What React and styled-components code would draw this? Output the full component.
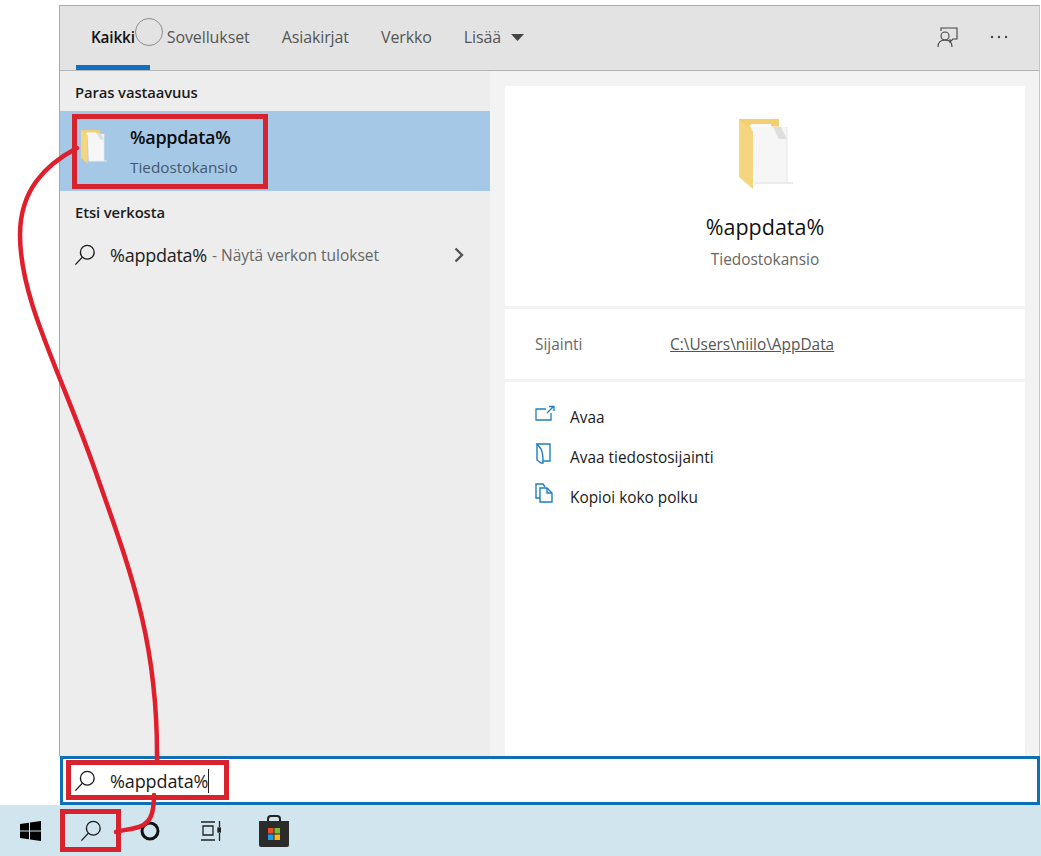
import React from "react";
import styled, { createGlobalStyle } from "styled-components";

const Global = createGlobalStyle`
  html, body { margin: 0; padding: 0; background: #fff; }
  body { font-family: "Open Sans", "Noto Sans", sans-serif; overflow: hidden; }
`;
const Page = styled.div`
  position: relative; width: 1041px; height: 856px; display: flex; flex-direction: column; background: #fff;
`;
const Window = styled.div`
  margin: 5px 0 0 59px; width: 981px; height: 751px; display: flex; flex-direction: column;
  border: 1px solid #a9a9a9; border-bottom: 0; border-right-color: #c4c4c4; box-sizing: border-box;
`;
const Tabs = styled.div`
  height: 65px; flex: none; display: flex; align-items: stretch; background: #e3e3e3;
  border-bottom: 1px solid #b4b4b4; box-sizing: border-box; padding-left: 16px;
`;
const Tab = styled.div`
  position: relative; display: flex; align-items: center; gap: 10px; height: 64px; padding: 0 16px 2px;
  box-sizing: border-box; font-size: 16px; letter-spacing: -0.1px;
  color: ${p => (p.$active ? "#111" : "#555")}; font-weight: ${p => (p.$active ? 600 : 400)};
  &::after {
    content: ""; display: ${p => (p.$active ? "block" : "none")}; position: absolute;
    left: 0; right: 0; bottom: 0; height: 5px; background: #0f6fc0;
  }
`;
const ActiveTab = styled(Tab)`padding: 0 15px 2px; font-size: 15.4px; margin-right: 1px; letter-spacing: -0.2px;`;
const Spacer = styled.div`flex: 1;`;
const TopIcons = styled.div`
  display: flex; align-items: center; gap: 31px; padding-right: 31px; padding-bottom: 2px;
`;
const Body = styled.div`flex: 1; display: flex; min-height: 0;`;
const Left = styled.div`
  width: 430px; flex: none; background: #ededed; display: flex; flex-direction: column;
`;
const Heading = styled.div`
  height: ${p => p.$h}px; box-sizing: border-box; padding: ${p => p.$pt}px 0 0 15px;
  font-size: 14.8px; font-weight: 600; color: #1c1c1c; letter-spacing: -0.1px; line-height: 18px;
`;
const BestRow = styled.div`
  height: 80px; background: #a6c8e7; display: flex; align-items: flex-start; flex: none;
`;
const BestIcon = styled.div`width: 70px; flex: none; padding: 18px 0 0 20px; box-sizing: border-box; display: flex;`;
const BestText = styled.div`display: flex; flex-direction: column; padding-top: 13px;`;
const BestTitle = styled.div`font-size: 18px; font-weight: 600; color: #0c0c0c; line-height: 26px; letter-spacing: -0.3px;`;
const BestSub = styled.div`font-size: 15.3px; color: #44586b; line-height: 20px; margin-top: 7px;`;
const WebRow = styled.div`
  height: 44px; display: flex; align-items: center; padding: 0 26px 0 14px; flex: none;
`;
const WebQuery = styled.span`font-size: 18px; color: #222; margin-left: 14px; letter-spacing: -0.25px;`;
const WebHint = styled.span`font-size: 15.5px; color: #666; margin-left: 5px; flex: 1;`;
const Right = styled.div`
  flex: 1; background: #f3f3f3; padding: 15px 14px 0 15px; display: flex; min-width: 0;
`;
const Card = styled.div`
  flex: 1; background: #fff; display: flex; flex-direction: column;
`;
const Hero = styled.div`
  height: 223px; flex: none; display: flex; flex-direction: column; align-items: center; padding-top: 31px;
  box-sizing: border-box; border-bottom: 3px solid #f3f3f3;
`;
const HeroTitle = styled.div`font-size: 21.5px; color: #111; line-height: 30px; margin-top: 23px;`;
const HeroSub = styled.div`font-size: 15.4px; color: #666; line-height: 20px; margin-top: 8px;`;
const Location = styled.div`
  height: 73px; flex: none; display: flex; align-items: center; padding: 0 0 0 30px; box-sizing: border-box;
  border-bottom: 3px solid #f3f3f3; font-size: 15.4px; color: #666;
`;
const LocLabel = styled.div`width: 135px;`;
const LocLink = styled.span`text-decoration: underline; color: #555;`;
const Actions = styled.div`display: flex; flex-direction: column; padding-top: 15px;`;
const Action = styled.div`
  height: 40px; display: flex; align-items: center; padding-left: 30px; font-size: 15.4px; color: #1a1a1a;
`;
const ActionIcon = styled.div`width: 35px; flex: none; display: flex; transform: translateY(-4px);`;
const SearchBox = styled.div`
  margin-left: 60px; width: 980px; height: 49px; flex: none; box-sizing: border-box; background: #fff;
  border: 3px solid #0f6fb5; display: flex; align-items: center; padding: 0 0 0 11px;
`;
const SearchText = styled.span`
  font-size: 18px; color: #1a1a1a; margin-left: 14px; border-right: 1px solid #222; line-height: 24px; letter-spacing: -0.1px;
`;
const Taskbar = styled.div`
  flex: 1; background: #d1e5ef; display: flex; align-items: center; padding-left: 20px;
`;
const Slot = styled.div`width: ${p => p.$w}px; flex: none; display: flex;`;
const Overlay = styled.svg`position: absolute; inset: 0; pointer-events: none;`;

const Glass = ({ size = 24, sw = 1.5 }) => (
  <svg width={size} height={size} viewBox="0 0 24 24" fill="none" stroke="#1a1a1a" strokeWidth={sw}>
    <circle cx="14.5" cy="9" r="7.5" />
    <path d="M9.2 14.3 L1.5 22.5" />
  </svg>
);
const Folder = ({ w, h }) => (
  <svg width={w} height={h} viewBox="0 0 56 72" fill="none">
    <path d="M2 2 H42 V12 H2Z" fill="#f3cf72" />
    <path d="M2 2 L16 14 V72 L2 60Z" fill="#f6d57f" />
    <path d="M12 8 L50 10 V66 H18 L16 14Z" fill="#f6f6f6" />
    <path d="M14 7 H34 V10 H14Z" fill="#fbfbfb" />
    <path d="M36 10 H44 L50 22 H42Z" fill="#dedede" />
    <path d="M18 66 H56" stroke="#ececec" strokeWidth="2" />
    <path d="M50 10 V66" stroke="#e6e6e6" />
  </svg>
);

export default function App() {
  return (
    <Page>
      <Global />
      <Window>
        <Tabs>
          <ActiveTab $active>Kaikki</ActiveTab>
          <Tab>Sovellukset</Tab>
          <Tab>Asiakirjat</Tab>
          <Tab>Verkko</Tab>
          <Tab>
            Lisää
            <svg width="13" height="7" viewBox="0 0 13 7"><path d="M0 0H13L6.5 7Z" fill="#444" /></svg>
          </Tab>
          <Spacer />
          <TopIcons>
            <svg width="22" height="22" viewBox="0 0 22 22" fill="none" stroke="#444" strokeWidth="1.1">
              <path d="M4 5 V2 H20 V13 H16 L13 16 V13" />
              <circle cx="8" cy="10" r="4" />
              <path d="M1 21 C1 16 4 14 8 14 C12 14 15 16 15 21" />
            </svg>
            <svg width="18" height="4" viewBox="0 0 18 4"><g fill="#444"><circle cx="2" cy="2" r="1.2" /><circle cx="9" cy="2" r="1.2" /><circle cx="16" cy="2" r="1.2" /></g></svg>
          </TopIcons>
        </Tabs>
        <Body>
          <Left>
            <Heading $h={40} $pt={12}>Paras vastaavuus</Heading>
            <BestRow>
              <BestIcon><Folder w={27} h={35} /></BestIcon>
              <BestText>
                <BestTitle>%appdata%</BestTitle>
                <BestSub>Tiedostokansio</BestSub>
              </BestText>
            </BestRow>
            <Heading $h={42} $pt={12}>Etsi verkosta</Heading>
            <WebRow>
              <Glass size={22} />
              <WebQuery>%appdata%</WebQuery>
              <WebHint>- Näytä verkon tulokset</WebHint>
              <svg width="10" height="16" viewBox="0 0 10 16" fill="none" stroke="#555" strokeWidth="2.4"><path d="M1.5 1.5 L8 8 L1.5 14.5" /></svg>
            </WebRow>
          </Left>
          <Right>
            <Card>
              <Hero>
                <Folder w={56} h={72} />
                <HeroTitle>%appdata%</HeroTitle>
                <HeroSub>Tiedostokansio</HeroSub>
              </Hero>
              <Location>
                <LocLabel>Sijainti</LocLabel>
                <LocLink>C:\Users\niilo\AppData</LocLink>
              </Location>
              <Actions>
                <Action>
                  <ActionIcon>
                    <svg width="20" height="16" viewBox="0 0 20 16" fill="none" stroke="#1f7fc0" strokeWidth="1.3">
                      <path d="M11 4 H1 V15 H16 V8" /><path d="M12 8 L18 2 M14 1.5 H19 V6" />
                    </svg>
                  </ActionIcon>
                  Avaa
                </Action>
                <Action>
                  <ActionIcon>
                    <svg width="17" height="21" viewBox="0 0 17 21" fill="none" stroke="#1f7fc0" strokeWidth="1.4">
                      <path d="M2 1 H15 V18 H8 C8 14 8 10 6 6 Z" /><path d="M2 1 V17 L6 20 H8 V18" />
                    </svg>
                  </ActionIcon>
                  Avaa tiedostosijainti
                </Action>
                <Action>
                  <ActionIcon>
                    <svg width="18" height="20" viewBox="0 0 18 20" fill="none" stroke="#1f7fc0" strokeWidth="1.4">
                      <path d="M5 15 H1 V1 H8 L10 4" /><path d="M5 5 H12 L17 10 V19 H5 Z" /><path d="M12 5 V10 H17" />
                    </svg>
                  </ActionIcon>
                  Kopioi koko polku
                </Action>
              </Actions>
            </Card>
          </Right>
        </Body>
      </Window>
      <SearchBox>
        <Glass size={22} />
        <SearchText>%appdata%</SearchText>
      </SearchBox>
      <Taskbar>
        <Slot $w={60}>
          <svg width="21" height="20" viewBox="0 0 21 20" fill="#000">
            <path d="M0 3 L9 1.7 V9.4 H0Z M10 1.5 L21 0 V9.4 H10Z M0 10.6 H9 V18.3 L0 17Z M10 10.6 H21 V20 L10 18.5Z" />
          </svg>
        </Slot>
        <Slot $w={60}><Glass size={22} /></Slot>
        <Slot $w={60}>
          <svg width="20" height="20" viewBox="0 0 20 20" fill="none" stroke="#111" strokeWidth="3"><circle cx="10" cy="10" r="8" /></svg>
        </Slot>
        <Slot $w={59}>
          <svg width="21" height="20" viewBox="0 0 21 20" fill="none" stroke="#222" strokeWidth="1.3">
            <path d="M1 1 H15 M1 19 H15 M3 5 H13 V14 H3 Z M19.5 0 V6 M19.5 12 V20" /><rect x="18" y="7" width="3" height="4" fill="#222" />
          </svg>
        </Slot>
        <svg width="30" height="32" viewBox="0 0 30 32">
          <path d="M9 8 V4 Q9 1 12 1 H18 Q21 1 21 4 V8" fill="none" stroke="#222" strokeWidth="2" />
          <path d="M0 6 H30 V30 Q30 32 28 32 H2 Q0 32 0 30Z" fill="#2b2b2b" />
          <rect x="9" y="13" width="5.5" height="5.5" fill="#e8502a" />
          <rect x="15.5" y="13" width="5.5" height="5.5" fill="#7fb935" />
          <rect x="9" y="19.5" width="5.5" height="5.5" fill="#1f9ee6" />
          <rect x="15.5" y="19.5" width="5.5" height="5.5" fill="#fdb813" />
        </svg>
      </Taskbar>
      <Overlay width="1041" height="856" viewBox="0 0 1041 856" fill="none">
        <circle cx="149" cy="32" r="13.5" stroke="#8c8c8c" strokeWidth="1" fill="none" />
        <g stroke="#e01f2d" strokeWidth="4.5" fill="none">
          <path d="M77 148 C45 165 20 190 20 235 C20 300 60 370 95 470 C130 570 158 640 157 760" strokeLinecap="round" />
          <path d="M154 795 C154 815 150 825 135 828 C127 830 122 830 116 832" strokeLinecap="round" />
        </g>
        <g stroke="#d8232f" strokeWidth="5" fill="none">
          <rect x="74.5" y="116.5" width="191" height="70" />
          <rect x="68.5" y="762.5" width="158" height="35" />
          <rect x="62.5" y="811.5" width="56" height="38" />
        </g>
      </Overlay>
    </Page>
  );
}
